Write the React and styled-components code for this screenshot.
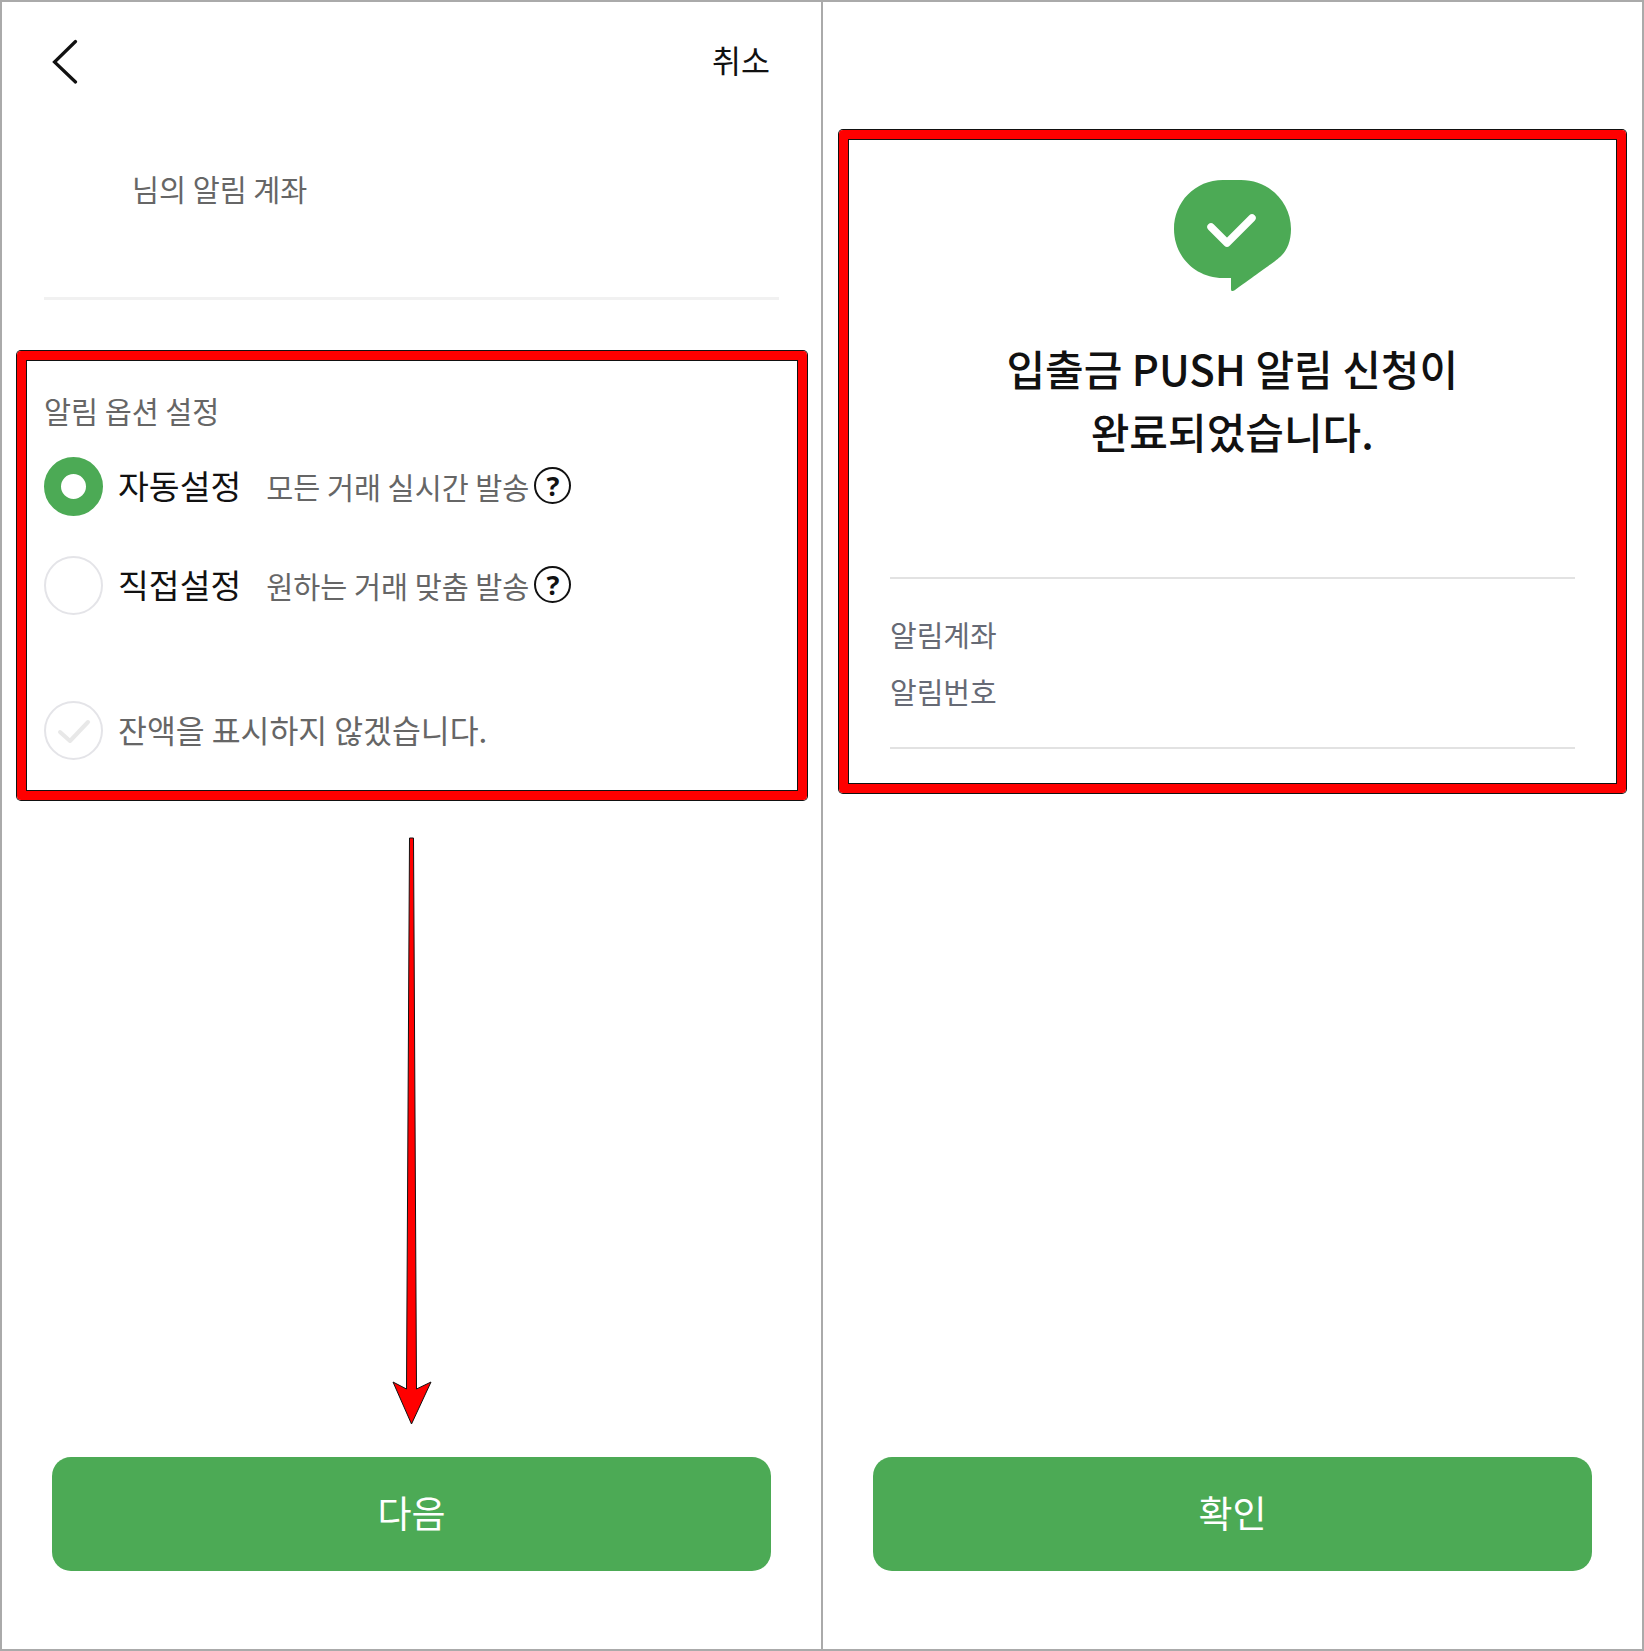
import React from "react";
import styled, { createGlobalStyle } from "styled-components";

const GlobalStyle = createGlobalStyle`
  html, body {
    margin: 0;
    padding: 0;
    background: #fff;
  }
  body {
    font-family: "Noto Sans CJK KR", "Noto Sans", sans-serif;
  }
`;

const Frame = styled.div`
  display: grid;
  grid-template-columns: 1fr 1fr;
  column-gap: 2px;
  box-sizing: border-box;
  width: 1644px;
  height: 1651px;
  background: #aaa;
  border: 2px solid #aaa;
`;

const Panel = styled.section`
  position: relative;
  display: flex;
  flex-direction: column;
  background: #fff;
`;

const TopBar = styled.header`
  display: flex;
  align-items: center;
  justify-content: space-between;
  height: 118px;
  padding: 0 51px 0 48px;
`;

const CancelLink = styled.span`
  padding-bottom: 4px;
  font-size: 31.5px;
  line-height: 40px;
  color: #111;
`;

const AccountTitle = styled.div`
  height: 177px;
  padding: 48px 0 0 130px;
  box-sizing: border-box;
  font-size: 29.4px;
  line-height: 40px;
  color: #666;
`;

const Rule = styled.hr`
  height: 3px;
  margin: 0 42px;
  border: 0;
  background: #f1f1f1;
`;

const Callout = styled.div`
  box-sizing: border-box;
  height: ${(p) => p.$height}px;
  margin: ${(p) => p.$top}px ${(p) => p.$right}px 0 ${(p) => p.$left}px;
  border: 9px solid #f00;
  border-radius: 4px;
  box-shadow: 0 0 0 1px #111, inset 0 0 0 1px #111;
`;

const OptionsBody = styled.div`
  display: flex;
  flex-direction: column;
  padding: 30px 0 0 18px;
`;

const OptionsTitle = styled.div`
  margin-bottom: 27px;
  font-size: 29.4px;
  line-height: 40px;
  color: #666;
`;

const Row = styled.div`
  display: flex;
  align-items: center;
  gap: 15px;
  margin-bottom: ${(p) => p.$after || 0}px;
`;

const Radio = styled.span`
  flex: none;
  box-sizing: border-box;
  display: flex;
  width: 59px;
  height: 59px;
  border-radius: 50%;
  background: #fff;
  border: ${(p) => (p.$on ? "17px solid #4caa55" : "2px solid #e4e4e8")};
`;

const OptionLabel = styled.span`
  padding-bottom: 3px;
  font-size: 33.5px;
  line-height: 44px;
  color: #111;
`;

const OptionHint = styled.span`
  margin-left: 10px;
  padding-bottom: 1px;
  font-size: 29.4px;
  line-height: 40px;
  color: #666;
`;

const HelpBadge = styled.span`
  display: flex;
  align-items: center;
  justify-content: center;
  flex: none;
  box-sizing: border-box;
  width: 37px;
  height: 37px;
  margin: 0 0 2px -10px;
  border: 2.8px solid #111;
  border-radius: 50%;
  font-family: "Noto Sans", sans-serif;
  font-size: 27px;
  line-height: 1;
  font-weight: 700;
  color: #111;
`;

const BalanceText = styled.span`
  padding-bottom: 1px;
  font-size: 31.4px;
  line-height: 44px;
  color: #666;
`;

const ActionButton = styled.button`
  display: block;
  flex: none;
  height: 114px;
  margin: auto 50.5px 78px 50.4px;
  padding: 0 0 4px;
  border: 0;
  border-radius: 19px;
  background: #4caa55;
  font-family: inherit;
  font-size: 37px;
  color: #fff;
`;

const DownArrow = styled.svg`
  position: absolute;
  left: 388px;
  top: 834px;
`;

const DoneBody = styled.div`
  display: flex;
  flex-direction: column;
  align-items: center;
  padding-top: 41px;
`;

const DoneHeading = styled.h1`
  margin: 44px 0 115px;
  font-size: 42px;
  font-weight: 500;
  line-height: 63px;
  text-align: center;
  color: #111;
`;

const InfoList = styled.div`
  align-self: stretch;
  margin: 0 42px;
  padding: 27px 0;
  border-top: 2px solid #e2e2e2;
  border-bottom: 2px solid #e2e2e2;
`;

const InfoLabel = styled.div`
  font-size: 29px;
  line-height: 57px;
  color: #666a75;
`;

const BackIcon = () => (
  <svg width="28" height="46" viewBox="0 0 28 46" fill="none">
    <path d="M25.5 3.5 L4.5 24 L25.5 44" stroke="#111" strokeWidth="3.2" strokeLinecap="round" strokeLinejoin="miter" />
  </svg>
);

const SuccessBubble = () => (
  <svg width="117" height="112" viewBox="0 0 117 112">
    <path
      d="M49 0 H67 C95 0 117 22 117 49 C117 61 113 70 108 75 C103 80 100 82 61 110 C58 112 57 111 57 109 V98 H49 C21 98 0 76 0 49 C0 22 21 0 49 0 Z"
      fill="#4caa55"
    />
    <path
      d="M37 47 L53 63 L78 38"
      fill="none"
      stroke="#fff"
      strokeWidth="7.5"
      strokeLinecap="round"
      strokeLinejoin="round"
    />
  </svg>
);

const FadedCheck = () => (
  <svg width="55" height="55" viewBox="2 2 55 55" fill="none">
    <path d="M16 31 L26 40 L44 21" stroke="#e8e8e8" strokeWidth="4" strokeLinecap="round" strokeLinejoin="round" />
  </svg>
);

export default function App() {
  return (
    <>
      <GlobalStyle />
      <Frame>
        <Panel>
          <TopBar>
            <BackIcon />
            <CancelLink>취소</CancelLink>
          </TopBar>
          <AccountTitle>님의 알림 계좌</AccountTitle>
          <Rule />
          <Callout $top={51} $left={15} $right={14} $height={449}>
            <OptionsBody>
              <OptionsTitle>알림 옵션 설정</OptionsTitle>
              <Row $after={40}>
                <Radio $on />
                <OptionLabel>자동설정</OptionLabel>
                <OptionHint>모든 거래 실시간 발송</OptionHint>
                <HelpBadge>?</HelpBadge>
              </Row>
              <Row $after={86}>
                <Radio />
                <OptionLabel>직접설정</OptionLabel>
                <OptionHint>원하는 거래 맞춤 발송</OptionHint>
                <HelpBadge>?</HelpBadge>
              </Row>
              <Row>
                <Radio>
                  <FadedCheck />
                </Radio>
                <BalanceText>잔액을 표시하지 않겠습니다.</BalanceText>
              </Row>
            </OptionsBody>
          </Callout>
          <DownArrow width="46" height="594" viewBox="390 836 46 594">
            <path
              d="M409.5 838 H413.5 L416.5 1389 L431 1382 L411.5 1424 L393 1382 L406.5 1389 Z"
              fill="#f00"
              stroke="#111"
              strokeWidth="1"
              strokeLinejoin="round"
            />
          </DownArrow>
          <ActionButton>다음</ActionButton>
        </Panel>
        <Panel>
          <Callout $top={128} $left={16} $right={16.5} $height={663}>
            <DoneBody>
              <SuccessBubble />
              <DoneHeading>
                입출금 PUSH 알림 신청이
                <br />
                완료되었습니다.
              </DoneHeading>
              <InfoList>
                <InfoLabel>알림계좌</InfoLabel>
                <InfoLabel>알림번호</InfoLabel>
              </InfoList>
            </DoneBody>
          </Callout>
          <ActionButton>확인</ActionButton>
        </Panel>
      </Frame>
    </>
  );
}
